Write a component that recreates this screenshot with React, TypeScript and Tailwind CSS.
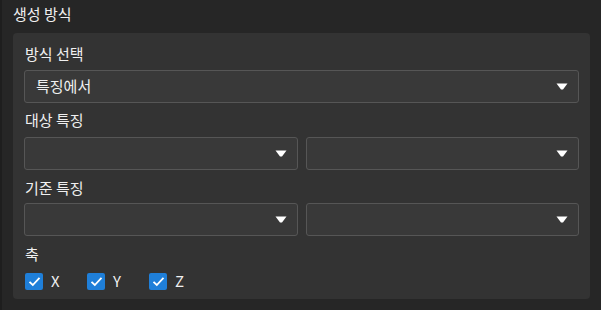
import React from "react";

function Arrow() {
  return (
    <svg width="12" height="7" viewBox="0 0 12 7" className="shrink-0">
      <path d="M0.5 0.5 H11.5 L7 6.5 H5 Z" fill="#ffffff" />
    </svg>
  );
}

function Select({ value }: { value?: string }) {
  return (
    <div className="flex h-[33px] flex-1 items-center justify-between rounded-[3px] border border-[#565656] bg-[#393939] pl-[11px] pr-[10px]">
      <span className="text-[15px] text-[#f0f0f0]">{value ?? ""}</span>
      <Arrow />
    </div>
  );
}

function Check({ label }: { label: string }) {
  return (
    <div className="flex w-[62px] items-center gap-[8px]">
      <div className="flex h-[17px] w-[18px] items-center justify-center rounded-[2px] bg-[#1f7fd9]">
        <svg width="13" height="11" viewBox="0 0 13 11">
          <path d="M1.5 5.8 L4.8 9 L11.5 1.8" fill="none" stroke="#ffffff" strokeWidth="1.8" />
        </svg>
      </div>
      <span className="text-[15px] text-[#f0f0f0]">{label}</span>
    </div>
  );
}

export default function App() {
  return (
    <div
      className="flex h-[310px] w-[601px] bg-[#262626] text-[#f0f0f0]"
      style={{ fontFamily: '"Noto Sans CJK KR", "Noto Sans", sans-serif' }}
    >
      <div className="w-[2px] bg-[#1e1e1e]" />
      <div className="flex flex-1 flex-col pl-[11px] pr-[11px]">
        <div className="h-[33px] pt-[3px] text-[15px] leading-[22px]">생성 방식</div>
        <div className="flex h-[266px] flex-col rounded-[4px] bg-[#333333] px-[11px] pt-[10px]">
          <div className="h-[27px] pl-[1px] text-[15px] leading-[22px]">방식 선택</div>
          <div className="flex">
            <Select value="특징에서" />
          </div>
          <div className="h-[34px] pl-[1px] pt-[6px] text-[15px] leading-[22px]">대상 특징</div>
          <div className="flex gap-[8px]">
            <Select />
            <Select />
          </div>
          <div className="h-[33px] pl-[1px] pt-[7px] text-[15px] leading-[22px]">기준 특징</div>
          <div className="flex gap-[8px]">
            <Select />
            <Select />
          </div>
          <div className="h-[34px] pl-[1px] pt-[7px] text-[15px] leading-[22px]">축</div>
          <div className="flex pl-[1px]">
            <Check label="X" />
            <Check label="Y" />
            <Check label="Z" />
          </div>
        </div>
      </div>
    </div>
  );
}
